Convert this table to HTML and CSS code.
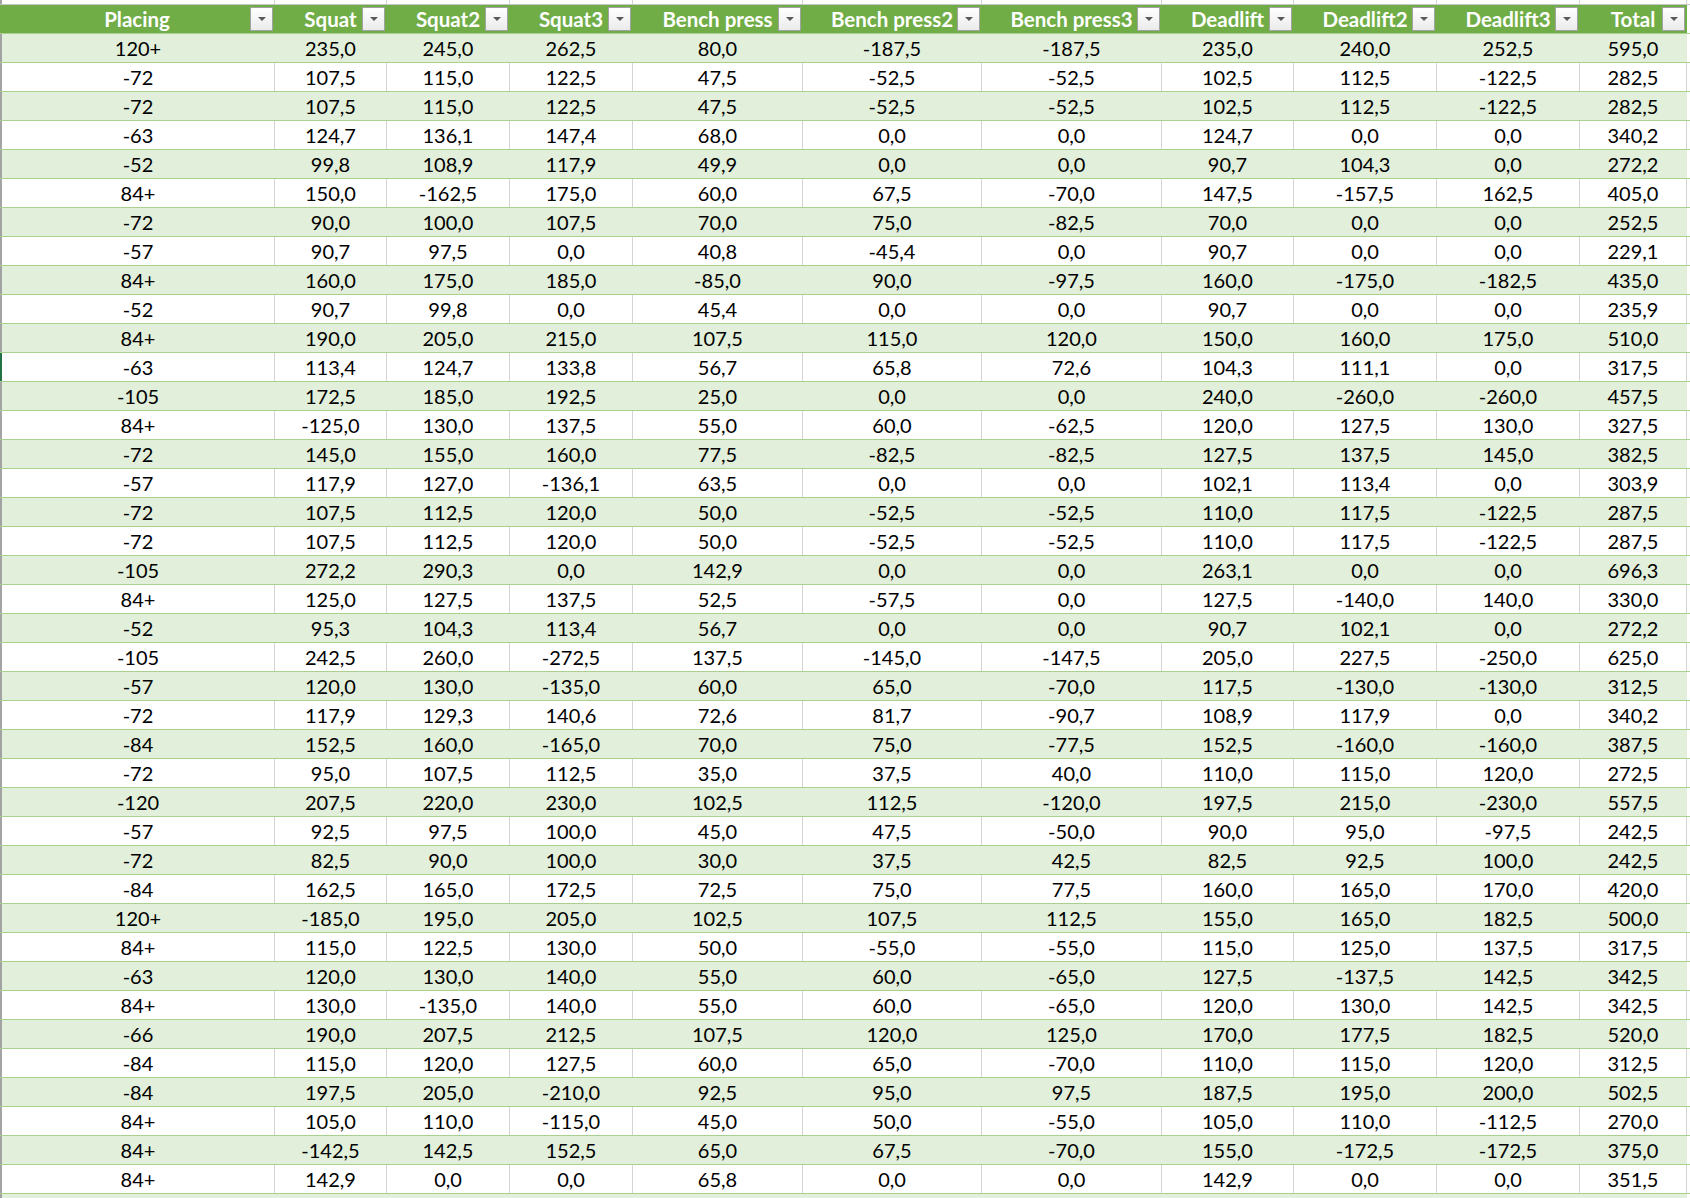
FILE: index.html
```html
<!DOCTYPE html>
<html>
<head>
<meta charset="utf-8">
<link rel="stylesheet" href="styles.css">
</head>
<body>
<div class="sheet">
<div class="row stub"><div class="c first"></div><div class="c"></div><div class="c"></div><div class="c"></div><div class="c"></div><div class="c"></div><div class="c"></div><div class="c"></div><div class="c"></div><div class="c"></div><div class="c"></div><div class="f"></div></div>
<div class="row head"><div class="c">Placing<span class="dd"></span></div><div class="c">Squat<span class="dd"></span></div><div class="c">Squat2<span class="dd"></span></div><div class="c">Squat3<span class="dd"></span></div><div class="c">Bench press<span class="dd"></span></div><div class="c">Bench press2<span class="dd"></span></div><div class="c">Bench press3<span class="dd"></span></div><div class="c">Deadlift<span class="dd"></span></div><div class="c">Deadlift2<span class="dd"></span></div><div class="c">Deadlift3<span class="dd"></span></div><div class="c">Total<span class="dd"></span></div><div class="f"></div></div>
<div class="row band"><div class="c first">120+</div><div class="c">235,0</div><div class="c">245,0</div><div class="c">262,5</div><div class="c">80,0</div><div class="c">-187,5</div><div class="c">-187,5</div><div class="c">235,0</div><div class="c">240,0</div><div class="c">252,5</div><div class="c">595,0</div><div class="f"></div></div>
<div class="row"><div class="c first">-72</div><div class="c">107,5</div><div class="c">115,0</div><div class="c">122,5</div><div class="c">47,5</div><div class="c">-52,5</div><div class="c">-52,5</div><div class="c">102,5</div><div class="c">112,5</div><div class="c">-122,5</div><div class="c">282,5</div><div class="f"></div></div>
<div class="row band"><div class="c first">-72</div><div class="c">107,5</div><div class="c">115,0</div><div class="c">122,5</div><div class="c">47,5</div><div class="c">-52,5</div><div class="c">-52,5</div><div class="c">102,5</div><div class="c">112,5</div><div class="c">-122,5</div><div class="c">282,5</div><div class="f"></div></div>
<div class="row"><div class="c first">-63</div><div class="c">124,7</div><div class="c">136,1</div><div class="c">147,4</div><div class="c">68,0</div><div class="c">0,0</div><div class="c">0,0</div><div class="c">124,7</div><div class="c">0,0</div><div class="c">0,0</div><div class="c">340,2</div><div class="f"></div></div>
<div class="row band"><div class="c first">-52</div><div class="c">99,8</div><div class="c">108,9</div><div class="c">117,9</div><div class="c">49,9</div><div class="c">0,0</div><div class="c">0,0</div><div class="c">90,7</div><div class="c">104,3</div><div class="c">0,0</div><div class="c">272,2</div><div class="f"></div></div>
<div class="row"><div class="c first">84+</div><div class="c">150,0</div><div class="c">-162,5</div><div class="c">175,0</div><div class="c">60,0</div><div class="c">67,5</div><div class="c">-70,0</div><div class="c">147,5</div><div class="c">-157,5</div><div class="c">162,5</div><div class="c">405,0</div><div class="f"></div></div>
<div class="row band"><div class="c first">-72</div><div class="c">90,0</div><div class="c">100,0</div><div class="c">107,5</div><div class="c">70,0</div><div class="c">75,0</div><div class="c">-82,5</div><div class="c">70,0</div><div class="c">0,0</div><div class="c">0,0</div><div class="c">252,5</div><div class="f"></div></div>
<div class="row"><div class="c first">-57</div><div class="c">90,7</div><div class="c">97,5</div><div class="c">0,0</div><div class="c">40,8</div><div class="c">-45,4</div><div class="c">0,0</div><div class="c">90,7</div><div class="c">0,0</div><div class="c">0,0</div><div class="c">229,1</div><div class="f"></div></div>
<div class="row band"><div class="c first">84+</div><div class="c">160,0</div><div class="c">175,0</div><div class="c">185,0</div><div class="c">-85,0</div><div class="c">90,0</div><div class="c">-97,5</div><div class="c">160,0</div><div class="c">-175,0</div><div class="c">-182,5</div><div class="c">435,0</div><div class="f"></div></div>
<div class="row"><div class="c first">-52</div><div class="c">90,7</div><div class="c">99,8</div><div class="c">0,0</div><div class="c">45,4</div><div class="c">0,0</div><div class="c">0,0</div><div class="c">90,7</div><div class="c">0,0</div><div class="c">0,0</div><div class="c">235,9</div><div class="f"></div></div>
<div class="row band"><div class="c first">84+</div><div class="c">190,0</div><div class="c">205,0</div><div class="c">215,0</div><div class="c">107,5</div><div class="c">115,0</div><div class="c">120,0</div><div class="c">150,0</div><div class="c">160,0</div><div class="c">175,0</div><div class="c">510,0</div><div class="f"></div></div>
<div class="row"><div class="c first sel">-63</div><div class="c">113,4</div><div class="c">124,7</div><div class="c">133,8</div><div class="c">56,7</div><div class="c">65,8</div><div class="c">72,6</div><div class="c">104,3</div><div class="c">111,1</div><div class="c">0,0</div><div class="c">317,5</div><div class="f"></div></div>
<div class="row band"><div class="c first">-105</div><div class="c">172,5</div><div class="c">185,0</div><div class="c">192,5</div><div class="c">25,0</div><div class="c">0,0</div><div class="c">0,0</div><div class="c">240,0</div><div class="c">-260,0</div><div class="c">-260,0</div><div class="c">457,5</div><div class="f"></div></div>
<div class="row"><div class="c first">84+</div><div class="c">-125,0</div><div class="c">130,0</div><div class="c">137,5</div><div class="c">55,0</div><div class="c">60,0</div><div class="c">-62,5</div><div class="c">120,0</div><div class="c">127,5</div><div class="c">130,0</div><div class="c">327,5</div><div class="f"></div></div>
<div class="row band"><div class="c first">-72</div><div class="c">145,0</div><div class="c">155,0</div><div class="c">160,0</div><div class="c">77,5</div><div class="c">-82,5</div><div class="c">-82,5</div><div class="c">127,5</div><div class="c">137,5</div><div class="c">145,0</div><div class="c">382,5</div><div class="f"></div></div>
<div class="row"><div class="c first">-57</div><div class="c">117,9</div><div class="c">127,0</div><div class="c">-136,1</div><div class="c">63,5</div><div class="c">0,0</div><div class="c">0,0</div><div class="c">102,1</div><div class="c">113,4</div><div class="c">0,0</div><div class="c">303,9</div><div class="f"></div></div>
<div class="row band"><div class="c first">-72</div><div class="c">107,5</div><div class="c">112,5</div><div class="c">120,0</div><div class="c">50,0</div><div class="c">-52,5</div><div class="c">-52,5</div><div class="c">110,0</div><div class="c">117,5</div><div class="c">-122,5</div><div class="c">287,5</div><div class="f"></div></div>
<div class="row"><div class="c first">-72</div><div class="c">107,5</div><div class="c">112,5</div><div class="c">120,0</div><div class="c">50,0</div><div class="c">-52,5</div><div class="c">-52,5</div><div class="c">110,0</div><div class="c">117,5</div><div class="c">-122,5</div><div class="c">287,5</div><div class="f"></div></div>
<div class="row band"><div class="c first">-105</div><div class="c">272,2</div><div class="c">290,3</div><div class="c">0,0</div><div class="c">142,9</div><div class="c">0,0</div><div class="c">0,0</div><div class="c">263,1</div><div class="c">0,0</div><div class="c">0,0</div><div class="c">696,3</div><div class="f"></div></div>
<div class="row"><div class="c first">84+</div><div class="c">125,0</div><div class="c">127,5</div><div class="c">137,5</div><div class="c">52,5</div><div class="c">-57,5</div><div class="c">0,0</div><div class="c">127,5</div><div class="c">-140,0</div><div class="c">140,0</div><div class="c">330,0</div><div class="f"></div></div>
<div class="row band"><div class="c first">-52</div><div class="c">95,3</div><div class="c">104,3</div><div class="c">113,4</div><div class="c">56,7</div><div class="c">0,0</div><div class="c">0,0</div><div class="c">90,7</div><div class="c">102,1</div><div class="c">0,0</div><div class="c">272,2</div><div class="f"></div></div>
<div class="row"><div class="c first">-105</div><div class="c">242,5</div><div class="c">260,0</div><div class="c">-272,5</div><div class="c">137,5</div><div class="c">-145,0</div><div class="c">-147,5</div><div class="c">205,0</div><div class="c">227,5</div><div class="c">-250,0</div><div class="c">625,0</div><div class="f"></div></div>
<div class="row band"><div class="c first">-57</div><div class="c">120,0</div><div class="c">130,0</div><div class="c">-135,0</div><div class="c">60,0</div><div class="c">65,0</div><div class="c">-70,0</div><div class="c">117,5</div><div class="c">-130,0</div><div class="c">-130,0</div><div class="c">312,5</div><div class="f"></div></div>
<div class="row"><div class="c first">-72</div><div class="c">117,9</div><div class="c">129,3</div><div class="c">140,6</div><div class="c">72,6</div><div class="c">81,7</div><div class="c">-90,7</div><div class="c">108,9</div><div class="c">117,9</div><div class="c">0,0</div><div class="c">340,2</div><div class="f"></div></div>
<div class="row band"><div class="c first">-84</div><div class="c">152,5</div><div class="c">160,0</div><div class="c">-165,0</div><div class="c">70,0</div><div class="c">75,0</div><div class="c">-77,5</div><div class="c">152,5</div><div class="c">-160,0</div><div class="c">-160,0</div><div class="c">387,5</div><div class="f"></div></div>
<div class="row"><div class="c first">-72</div><div class="c">95,0</div><div class="c">107,5</div><div class="c">112,5</div><div class="c">35,0</div><div class="c">37,5</div><div class="c">40,0</div><div class="c">110,0</div><div class="c">115,0</div><div class="c">120,0</div><div class="c">272,5</div><div class="f"></div></div>
<div class="row band"><div class="c first">-120</div><div class="c">207,5</div><div class="c">220,0</div><div class="c">230,0</div><div class="c">102,5</div><div class="c">112,5</div><div class="c">-120,0</div><div class="c">197,5</div><div class="c">215,0</div><div class="c">-230,0</div><div class="c">557,5</div><div class="f"></div></div>
<div class="row"><div class="c first">-57</div><div class="c">92,5</div><div class="c">97,5</div><div class="c">100,0</div><div class="c">45,0</div><div class="c">47,5</div><div class="c">-50,0</div><div class="c">90,0</div><div class="c">95,0</div><div class="c">-97,5</div><div class="c">242,5</div><div class="f"></div></div>
<div class="row band"><div class="c first">-72</div><div class="c">82,5</div><div class="c">90,0</div><div class="c">100,0</div><div class="c">30,0</div><div class="c">37,5</div><div class="c">42,5</div><div class="c">82,5</div><div class="c">92,5</div><div class="c">100,0</div><div class="c">242,5</div><div class="f"></div></div>
<div class="row"><div class="c first">-84</div><div class="c">162,5</div><div class="c">165,0</div><div class="c">172,5</div><div class="c">72,5</div><div class="c">75,0</div><div class="c">77,5</div><div class="c">160,0</div><div class="c">165,0</div><div class="c">170,0</div><div class="c">420,0</div><div class="f"></div></div>
<div class="row band"><div class="c first">120+</div><div class="c">-185,0</div><div class="c">195,0</div><div class="c">205,0</div><div class="c">102,5</div><div class="c">107,5</div><div class="c">112,5</div><div class="c">155,0</div><div class="c">165,0</div><div class="c">182,5</div><div class="c">500,0</div><div class="f"></div></div>
<div class="row"><div class="c first">84+</div><div class="c">115,0</div><div class="c">122,5</div><div class="c">130,0</div><div class="c">50,0</div><div class="c">-55,0</div><div class="c">-55,0</div><div class="c">115,0</div><div class="c">125,0</div><div class="c">137,5</div><div class="c">317,5</div><div class="f"></div></div>
<div class="row band"><div class="c first">-63</div><div class="c">120,0</div><div class="c">130,0</div><div class="c">140,0</div><div class="c">55,0</div><div class="c">60,0</div><div class="c">-65,0</div><div class="c">127,5</div><div class="c">-137,5</div><div class="c">142,5</div><div class="c">342,5</div><div class="f"></div></div>
<div class="row"><div class="c first">84+</div><div class="c">130,0</div><div class="c">-135,0</div><div class="c">140,0</div><div class="c">55,0</div><div class="c">60,0</div><div class="c">-65,0</div><div class="c">120,0</div><div class="c">130,0</div><div class="c">142,5</div><div class="c">342,5</div><div class="f"></div></div>
<div class="row band"><div class="c first">-66</div><div class="c">190,0</div><div class="c">207,5</div><div class="c">212,5</div><div class="c">107,5</div><div class="c">120,0</div><div class="c">125,0</div><div class="c">170,0</div><div class="c">177,5</div><div class="c">182,5</div><div class="c">520,0</div><div class="f"></div></div>
<div class="row"><div class="c first">-84</div><div class="c">115,0</div><div class="c">120,0</div><div class="c">127,5</div><div class="c">60,0</div><div class="c">65,0</div><div class="c">-70,0</div><div class="c">110,0</div><div class="c">115,0</div><div class="c">120,0</div><div class="c">312,5</div><div class="f"></div></div>
<div class="row band"><div class="c first">-84</div><div class="c">197,5</div><div class="c">205,0</div><div class="c">-210,0</div><div class="c">92,5</div><div class="c">95,0</div><div class="c">97,5</div><div class="c">187,5</div><div class="c">195,0</div><div class="c">200,0</div><div class="c">502,5</div><div class="f"></div></div>
<div class="row"><div class="c first">84+</div><div class="c">105,0</div><div class="c">110,0</div><div class="c">-115,0</div><div class="c">45,0</div><div class="c">50,0</div><div class="c">-55,0</div><div class="c">105,0</div><div class="c">110,0</div><div class="c">-112,5</div><div class="c">270,0</div><div class="f"></div></div>
<div class="row band"><div class="c first">84+</div><div class="c">-142,5</div><div class="c">142,5</div><div class="c">152,5</div><div class="c">65,0</div><div class="c">67,5</div><div class="c">-70,0</div><div class="c">155,0</div><div class="c">-172,5</div><div class="c">-172,5</div><div class="c">375,0</div><div class="f"></div></div>
<div class="row"><div class="c first">84+</div><div class="c">142,9</div><div class="c">0,0</div><div class="c">0,0</div><div class="c">65,8</div><div class="c">0,0</div><div class="c">0,0</div><div class="c">142,9</div><div class="c">0,0</div><div class="c">0,0</div><div class="c">351,5</div><div class="f"></div></div>
<div class="row band"><div class="c first"></div><div class="c"></div><div class="c"></div><div class="c"></div><div class="c"></div><div class="c"></div><div class="c"></div><div class="c"></div><div class="c"></div><div class="c"></div><div class="c"></div><div class="f"></div></div>
</div>
</body>
</html>
```

FILE: styles.css
```css
html, body {
  margin: 0;
  padding: 0;
  background: #ffffff;
  overflow: hidden;
}

body {
  font-family: Lato, "Liberation Sans", Arial, sans-serif;
  color: #000000;
}

.sheet {
  width: 1690px;
}

.row {
  display: grid;
  grid-template-columns: 275px 112px 123px 123px 170px 179px 180px 132px 143px 143px 107px 1fr;
  height: 29px;
  box-sizing: border-box;
  border-bottom: 1px solid #a9d08e;
}

.c {
  position: relative;
  box-sizing: border-box;
  border-right: 1px solid #d4d4d4;
  text-align: center;
  font-size: 20px;
  line-height: 26px;
  padding-top: 1px;
  white-space: nowrap;
  overflow: hidden;
}

.f {
  background: #ffffff;
}

.first {
  border-left: 2px solid #a3a3a3;
}

.first.sel {
  border-left-color: #217346;
}

.stub {
  height: 5px;
  border-bottom: 1px solid #c6c6c6;
}

.stub .c {
  padding: 0;
}

.band .c {
  background: #e2efda;
  border-right-color: #e2efda;
}

.head .c {
  background: #70ad47;
  border-right-color: #70ad47;
  color: #ffffff;
  font-weight: bold;
  font-size: 20.5px;
  padding-top: 1px;
}

.dd {
  position: absolute;
  right: 1px;
  top: 2px;
  width: 23px;
  height: 24px;
  box-sizing: border-box;
  border: 1px solid #a2a2a2;
  background: linear-gradient(#ffffff, #ebebeb);
}

.dd::after {
  content: "";
  position: absolute;
  left: 7px;
  top: 9px;
  border-left: 4px solid transparent;
  border-right: 4px solid transparent;
  border-top: 4px solid #5a5a5a;
}
```
